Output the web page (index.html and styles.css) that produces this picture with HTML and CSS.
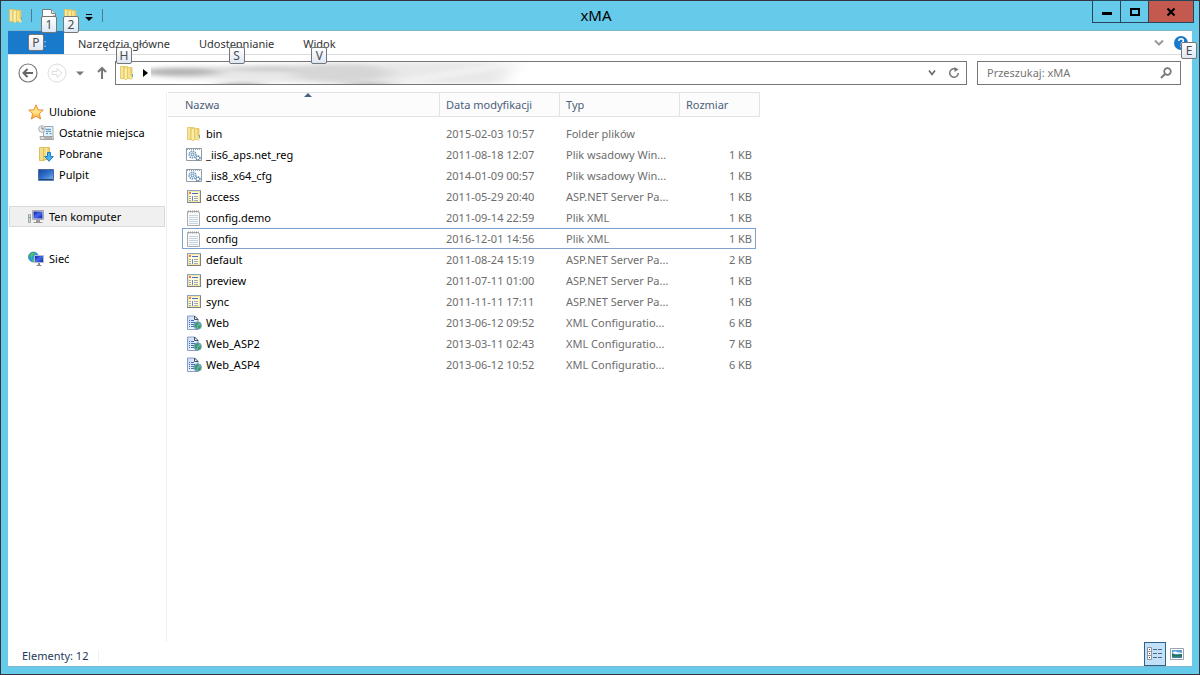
FILE: index.html
```html
<!DOCTYPE html>
<html lang="pl">
<head>
<meta charset="utf-8">
<title>xMA</title>
<link rel="stylesheet" href="styles.css">
</head>
<body>
<svg class="defs" aria-hidden="true">
  <defs>
    <linearGradient id="gold" x1="0" x2="1" y1="0" y2="0"><stop offset="0" stop-color="#efd674"/><stop offset=".5" stop-color="#f8e596"/><stop offset="1" stop-color="#e5c654"/></linearGradient>
    <linearGradient id="screen" x1="0" x2="1" y1="0" y2="1"><stop offset="0" stop-color="#16469b"/><stop offset=".5" stop-color="#2f6ecb"/><stop offset="1" stop-color="#7db2ee"/></linearGradient>
    <linearGradient id="blue" x1="0" x2="1" y1="0" y2="1"><stop offset="0" stop-color="#0a1ea0"/><stop offset=".5" stop-color="#4668ee"/><stop offset="1" stop-color="#0a1cae"/></linearGradient>
    <linearGradient id="starfill" x1="0" x2="0" y1="0" y2="1"><stop offset="0" stop-color="#ffcf5e"/><stop offset=".5" stop-color="#ffe88a"/><stop offset="1" stop-color="#f9a12c"/></linearGradient>
    <linearGradient id="sheet" x1="0" x2="1" y1="0" y2="1"><stop offset="0" stop-color="#c5d8f2"/><stop offset="1" stop-color="#fff"/></linearGradient>
    <filter id="soft" x="-20%" y="-80%" width="140%" height="260%"><feGaussianBlur stdDeviation="9 2"/></filter>
  </defs>
  <symbol id="folder" viewBox="0 0 16 16">
    <path d="M1.500 1.500h5.500v12H1.500z" fill="#ecd47a" stroke="#e0c25c" stroke-width=".8"/>
    <path d="M7 2.500h6v11H7z" fill="url(#gold)" stroke="#e0c25c" stroke-width=".8"/>
    <path d="M2 2h2v11H2z" fill="#f7e7a0"/>
    <path d="M5 3.200l3.500-1.700v12L7 15l-2-1.500z" fill="#faeba6" stroke="#dcbc4c" stroke-width=".7"/>
    <path d="M11 10.500h2.500v4H11z" fill="#f4e08c"/><path d="M13.500 9v3" stroke="#58a9d4"/>
  </symbol>
  <symbol id="page" viewBox="0 0 16 16">
    <path d="M1.500 1.500h9l4 4v9h-13z" fill="#fff" stroke="#777"/>
    <path d="M10.500 1.500v4h4" fill="#ddd" stroke="#888"/><path d="M12 7l3 1-2 1z" fill="#f26a4b"/>
  </symbol>
  <symbol id="star" viewBox="0 0 16 16">
    <path d="M8 .8l2.100 5 5.200.3-4 3.500 1.300 5.400L8 12.200 3.400 15l1.300-5.400-4-3.500 5.200-.3z" fill="url(#starfill)" stroke="#e8842c" stroke-width=".9"/>
  </symbol>
  <symbol id="recent" viewBox="0 0 16 16">
    <path d="M7 1.500h8v10H5.500V6" fill="#e9f4fd" stroke="#9aa7b1"/>
    <path d="M8 4.500h5M8 8.500h2M11.500 8.500h2" stroke="#55a4d9" stroke-width="1.500"/><path d="M8 6.500h5" stroke="#899"/>
    <path d="M2 11.500h13l.5 3h-13z" fill="#ddd" stroke="#a2a2a2"/><path d="M6 13h8" stroke="#888"/>
    <circle cx="4" cy="4" r="3.300" fill="#eee" stroke="#a6abb0"/><path d="M4 2v2h2" fill="none" stroke="#555" stroke-width=".8"/>
  </symbol>
  <symbol id="downloads" viewBox="0 0 16 16">
    <path d="M1.500 1.500h5v13h-5z" fill="#f1dd8b" stroke="#dcc05c"/><path d="M5.500 1.500h6v12h-6z" fill="url(#gold)" stroke="#dcc05c"/>
    <path d="M9.500 6.500h3v4h2.800L11 15.300 6.700 10.500h2.800z" fill="#4bb2f2" stroke="#1c7cc4"/>
  </symbol>
  <symbol id="desktop" viewBox="0 0 16 16">
    <path d="M.5 2.500h15v10H.5z" fill="url(#screen)" stroke="#4a6c9c"/><path d="M0 13.500h16" stroke="#5d86bb"/><path d="M1 12.500h14" stroke="#24426e"/>
  </symbol>
  <symbol id="computer" viewBox="0 0 16 16">
    <path d="M.5 5.500h2v8h-2z" fill="#d8d8d8" stroke="#a0a5a2"/><path d="M1 8.500h1" stroke="#35b44a"/>
    <path d="M4.500 1.500h11v9h-11z" fill="#ddd" stroke="#aaa"/><path d="M5.500 2.500h9v7h-9z" fill="url(#blue)"/>
    <path d="M8 11h4v2H8z" fill="#999"/><path d="M5.500 13.500h9" stroke="#999"/>
  </symbol>
  <symbol id="network" viewBox="0 0 16 16">
    <circle cx="5.500" cy="6" r="5" fill="#2a9ed9" stroke="#2875af" stroke-width=".7"/><path d="M2 4.500Q3 1 7 1.500L5.500 4 4 5l-.5 3zM5 8l2 1-1 2-2-1z" fill="#58c349"/>
    <path d="M6.500 4.500h9v7h-9z" fill="url(#blue)" stroke="#b5bfcc"/><path d="M10 12h2v2h-2z" fill="#858b99"/><path d="M8.500 14.500h5" stroke="#858b99"/>
  </symbol>
  <symbol id="batch" viewBox="0 0 16 16">
    <path d="M.5 1.500h15v12H.5z" fill="#fff" stroke="#949aa2"/><path d="M1 2.500h14" stroke="#9aa5b5" stroke-dasharray="1 1"/>
    <circle cx="6.500" cy="7.500" r="3.300" fill="none" stroke="#6fa0c8" stroke-width="1.700" stroke-dasharray="1.500 .7"/><circle cx="6.500" cy="7.500" r="1.400" fill="#fff" stroke="#5584ad"/>
    <circle cx="12" cy="11" r="2" fill="#fff" stroke="#5079a3" stroke-width="1.300" stroke-dasharray="1.200 .5"/>
  </symbol>
  <symbol id="aspx" viewBox="0 0 16 16">
    <path d="M1.500 1.500h13v12h-13z" fill="#fffbe0" stroke="#8e9ab4"/><path d="M2.500 2.500h11v10h-11z" fill="none" stroke="#f6e69a"/><path d="M1 1.500h14" stroke="#8fa3c8"/><path d="M14.500 2v12M1 13.500h13.500" stroke="#7d8088"/>
    <path d="M3 4h2" stroke="#e0503c" stroke-width="1.500"/><path d="M6 4.500h6" stroke="#4470bb"/><path d="M3 7.500h2M3 9.500h2M3 11.500h2" stroke="#9aa8bb"/><path d="M8 7.500h4M8 9.500h4M8 11.500h4" stroke="#a2aab8"/>
    <path d="M6.500 7v5" stroke="#6a88bd"/>
  </symbol>
  <symbol id="text" viewBox="0 0 16 16">
    <path d="M1.500 1.500h11l1 1v13h-12z" fill="#fafafa" stroke="#ababab"/><path d="M2 1.500h11" stroke="#999" stroke-width="2" stroke-dasharray="1 1"/>
    <path d="M3 5.500h9M3 7.500h9M3 9.500h9M3 11.500h9M3 13.500h9" stroke="#c3d5e0"/>
  </symbol>
  <symbol id="webconfig" viewBox="0 0 16 16">
    <path d="M1.500 1h7l3.500 3.500V14.500H1.500z" fill="url(#sheet)" stroke="#8ba0c4"/><path d="M8.500 1v3.500H12z" fill="#fff" stroke="#33445e" stroke-width=".9"/>
    <path d="M3 5.500h1M3 7.500h1M3 9.500h1M3 11.500h1M5 5.500h3M5 7.500h4M5 9.500h3M5 11.500h3" stroke="#3f6cc0"/>
    <circle cx="11.700" cy="10.500" r="3.800" fill="#6fa8d0" stroke="#5a8ba8" stroke-width=".6"/><path d="M9 9l3-2 1 2-2 1 0 3-2-1zM12 11l3-1-1 3-2 1z" fill="#3aa04a"/>
  </symbol>
</svg>

<div class="window">
  <header class="titlebar">
    <div class="quick">
      <svg class="icon"><use href="#folder"/></svg>
      <span class="divider"></span>
      <button class="quick-button" aria-label="Właściwości"><svg class="icon"><use href="#page"/></svg><kbd class="tip tip-quick">1</kbd></button>
      <button class="quick-button" aria-label="Nowy folder"><svg class="icon"><use href="#folder"/></svg><kbd class="tip tip-quick">2</kbd></button>
      <button class="customize" aria-label="Dostosuj"><svg width="8" height="8" viewBox="0 0 8 8"><path d="M1 .5h6" stroke="#000"/><path d="M0 3h8L4 7z"/></svg></button>
      <span class="divider"></span>
    </div>
    <h1 class="title">xMA</h1>
    <div class="controls">
      <button class="control" aria-label="Minimalizuj"><svg width="12" height="12" viewBox="0 0 12 12"><path d="M1 7.500h10" stroke="#000" stroke-width="3"/></svg></button>
      <button class="control" aria-label="Maksymalizuj"><svg width="12" height="12" viewBox="0 0 12 12"><path d="M2 3h8v6H2z" fill="none" stroke="#000" stroke-width="2"/></svg></button>
      <button class="control close" aria-label="Zamknij"><svg width="12" height="12" viewBox="0 0 12 12"><path d="M2.500 2.500l7 7M9.500 2.500l-7 7" stroke="#000" stroke-width="2.200"/></svg></button>
    </div>
  </header>

  <div class="content">
    <nav class="ribbon">
      <button class="tab file-tab"><kbd class="tip tip-file">P</kbd>:</button>
      <button class="tab">Narzędzia główne<kbd class="tip tip-tab">H</kbd></button>
      <button class="tab">Udostępnianie<kbd class="tip tip-tab">S</kbd></button>
      <button class="tab">Widok<kbd class="tip tip-tab">V</kbd></button>
      <div class="ribbon-end">
        <button class="plain" aria-label="Rozwiń wstążkę"><svg width="10" height="8" viewBox="0 0 10 8"><path d="M1 1.500l4 4 4-4" fill="none" stroke="#999" stroke-width="2"/></svg></button>
        <button class="plain help" aria-label="Pomoc"><svg width="14" height="14" viewBox="0 0 14 14"><circle cx="7" cy="7" r="7" fill="#1979ca"/><path d="M4.800 5q0-2.200 2.300-2.200T9.400 5c0 1.500-2.200 1.400-2.200 3.400" fill="none" stroke="#fff" stroke-width="1.500"/><path d="M6.400 9.700H8v1.500H6.400z" fill="#fff"/></svg><kbd class="tip tip-help">E</kbd></button>
      </div>
    </nav>

    <div class="toolbar">
      <div class="history">
        <button class="plain" aria-label="Wstecz"><svg width="20" height="20" viewBox="0 0 20 20"><circle cx="10" cy="10" r="9" fill="none" stroke="#777" stroke-width="1.200"/><path d="M15 10H6M9.500 6L5.500 10l4 4" fill="none" stroke="#666" stroke-width="2"/></svg></button>
        <button class="plain" aria-label="Dalej"><svg width="20" height="20" viewBox="0 0 20 20"><circle cx="10" cy="10" r="9" fill="none" stroke="#ddd"/><path d="M5 8.500h5v-3l5 4.500-5 4.500v-3H5z" fill="none" stroke="#ddd"/></svg></button>
        <button class="plain" aria-label="Ostatnie lokalizacje"><svg width="8" height="5" viewBox="0 0 8 5"><path d="M0 .5h8l-4 4z" fill="#777"/></svg></button>
        <button class="plain up" aria-label="W górę"><svg width="10" height="14" viewBox="0 0 10 14"><path d="M5 13V2M1 6l4-4 4 4" fill="none" stroke="#777" stroke-width="2"/></svg></button>
      </div>
      <div class="address">
        <svg class="icon"><use href="#folder"/></svg>
        <svg class="crumb" width="5" height="8" viewBox="0 0 5 8"><path d="M0 0l5 4-5 4z"/></svg>
        <svg class="path" width="380" height="22" viewBox="0 0 380 22" aria-hidden="true">
          <g filter="url(#soft)">
            <path d="M10 5L200 0h165l-15 22-150 1L10 16z" fill="#e8e8e8"/>
            <ellipse cx="28" cy="10" rx="42" ry="4" fill="#b4b4b4"/>
            <ellipse cx="120" cy="7" rx="45" ry="2" fill="#c4c4c4"/>
            <ellipse cx="190" cy="11" rx="50" ry="9" fill="#d6d6d6"/>
            <ellipse cx="90" cy="23" rx="24" ry="2" fill="#999"/>
            <ellipse cx="218" cy="23" rx="24" ry="2" fill="#aaa"/>
            <path d="M250 20L360 2" stroke="#f4f4f4" stroke-width="5"/>
          </g>
        </svg>
        <div class="address-end">
          <button class="plain" aria-label="Poprzednie lokalizacje"><svg width="8" height="8" viewBox="0 0 8 8"><path d="M1 1.500l3 4 3-4" fill="none" stroke="#666" stroke-width="1.600"/></svg></button>
          <button class="plain" aria-label="Odśwież"><svg width="12" height="12" viewBox="0 0 12 12"><path d="M8 2.200A4.300 4.300 0 1 0 10.300 6" fill="none" stroke="#777" stroke-width="1.500"/><path d="M6.500 0v5L10.500 2.500z" fill="#777"/></svg></button>
        </div>
      </div>
      <label class="search">
        <input class="search-input" type="text" placeholder="Przeszukaj: xMA" aria-label="Przeszukaj: xMA">
        <svg width="12" height="12" viewBox="0 0 12 12"><circle cx="7.500" cy="4.500" r="3.300" fill="none" stroke="#777" stroke-width="1.700"/><path d="M5 7L1 11" stroke="#777" stroke-width="2"/></svg>
      </label>
    </div>

    <div class="main">
      <aside class="sidebar">
        <ul class="tree">
          <li><a class="node" href="#"><svg class="icon"><use href="#star"/></svg>Ulubione</a></li>
          <li><a class="node child" href="#"><svg class="icon"><use href="#recent"/></svg>Ostatnie miejsca</a></li>
          <li><a class="node child" href="#"><svg class="icon"><use href="#downloads"/></svg>Pobrane</a></li>
          <li><a class="node child" href="#"><svg class="icon"><use href="#desktop"/></svg>Pulpit</a></li>
        </ul>
        <ul class="tree"><li><a class="node current" href="#"><svg class="icon"><use href="#computer"/></svg>Ten komputer</a></li></ul>
        <ul class="tree"><li><a class="node" href="#"><svg class="icon"><use href="#network"/></svg>Sieć</a></li></ul>
      </aside>

      <main class="files">
        <table class="list">
          <colgroup><col class="col-name"><col class="col-data"><col class="col-data"><col class="col-size"></colgroup>
          <thead><tr><th class="name-head">Nazwa<svg class="sort" width="8" height="4" viewBox="0 0 8 4"><path d="M0 4l4-4 4 4z" fill="#4a5f85"/></svg></th><th>Data modyfikacji</th><th>Typ</th><th>Rozmiar</th></tr></thead>
          <tbody>
            <tr><td><span class="file"><svg class="icon"><use href="#folder"/></svg>bin</span></td><td>2015-02-03 10:57</td><td>Folder plików</td><td></td></tr>
            <tr><td><span class="file"><svg class="icon"><use href="#batch"/></svg>_iis6_aps.net_reg</span></td><td>2011-08-18 12:07</td><td>Plik wsadowy Win...</td><td>1 KB</td></tr>
            <tr><td><span class="file"><svg class="icon"><use href="#batch"/></svg>_iis8_x64_cfg</span></td><td>2014-01-09 00:57</td><td>Plik wsadowy Win...</td><td>1 KB</td></tr>
            <tr><td><span class="file"><svg class="icon"><use href="#aspx"/></svg>access</span></td><td>2011-05-29 20:40</td><td>ASP.NET Server Pa...</td><td>1 KB</td></tr>
            <tr><td><span class="file"><svg class="icon"><use href="#text"/></svg>config.demo</span></td><td>2011-09-14 22:59</td><td>Plik XML</td><td>1 KB</td></tr>
            <tr class="focused"><td><span class="file"><svg class="icon"><use href="#text"/></svg>config</span></td><td>2016-12-01 14:56</td><td>Plik XML</td><td>1 KB</td></tr>
            <tr><td><span class="file"><svg class="icon"><use href="#aspx"/></svg>default</span></td><td>2011-08-24 15:19</td><td>ASP.NET Server Pa...</td><td>2 KB</td></tr>
            <tr><td><span class="file"><svg class="icon"><use href="#aspx"/></svg>preview</span></td><td>2011-07-11 01:00</td><td>ASP.NET Server Pa...</td><td>1 KB</td></tr>
            <tr><td><span class="file"><svg class="icon"><use href="#aspx"/></svg>sync</span></td><td>2011-11-11 17:11</td><td>ASP.NET Server Pa...</td><td>1 KB</td></tr>
            <tr><td><span class="file"><svg class="icon"><use href="#webconfig"/></svg>Web</span></td><td>2013-06-12 09:52</td><td>XML Configuratio...</td><td>6 KB</td></tr>
            <tr><td><span class="file"><svg class="icon"><use href="#webconfig"/></svg>Web_ASP2</span></td><td>2013-03-11 02:43</td><td>XML Configuratio...</td><td>7 KB</td></tr>
            <tr><td><span class="file"><svg class="icon"><use href="#webconfig"/></svg>Web_ASP4</span></td><td>2013-06-12 10:52</td><td>XML Configuratio...</td><td>6 KB</td></tr>
          </tbody>
        </table>
      </main>
    </div>

    <footer class="status">
      <span class="count">Elementy: 12</span>
      <div class="views">
        <button class="view active" aria-label="Szczegóły"><svg width="16" height="14" viewBox="0 0 16 14"><path d="M.5.500h4v4h-4zM.5 4.500h4v4h-4zM.5 8.500h4v4h-4z" fill="#fff" stroke="#8d969e"/><path d="M2 2.500h1M2 10.500h1" stroke="#444"/><path d="M2 6.500h1" stroke="#d00" stroke-width="1"/><path d="M6 2.500h4M11 2.500h4M6 6.500h4M11 6.500h4M6 10.500h4M11 10.500h4" stroke="#526783"/></svg></button>
        <button class="view" aria-label="Duże ikony"><svg width="14" height="12" viewBox="0 0 14 12"><path d="M.5.500h13v11H.5z" fill="#fff" stroke="#98a3b0"/><path d="M2 2h10v8H2z" fill="#5c9fd6"/><path d="M2 5q3-3 5-1l5 1v1H2z" fill="#e8f5fa"/><path d="M2 5l4 2 6-1v4H2z" fill="#28725a"/><path d="M2 8.500h10V10H2z" fill="#3c87a0"/></svg></button>
      </div>
    </footer>
  </div>
</div>
</body>
</html>
```
FILE: styles.css
```css
* { box-sizing: border-box; }
body {
  margin: 0;
  font: 11px/16px "Noto Sans", "Open Sans", sans-serif;
  color: #000;
}
button { font: inherit; color: inherit; padding: 0; border: 0; background: none; }
svg { display: block; flex: none; }
.defs { position: absolute; width: 0; height: 0; }
.icon { width: 16px; height: 16px; }

.window {
  display: flex;
  flex-direction: column;
  min-height: 100vh;
  padding: 0 7px 7px;
  border: 1px solid #36343c;
  background: #66caea;
}
.titlebar {
  display: grid;
  grid-template-columns: 1fr auto 1fr;
  height: 29px;
}
.quick { display: flex; align-items: center; gap: 7px; height: 29px; }
.divider { width: 1px; height: 13px; background: #50798d; }
.quick-button { position: relative; margin-right: -1px; }
.quick-button:first-of-type { margin-left: 2px; }
.customize { margin: 4px 2px 0 0; }
.title { margin: 0; padding-right: 8px; font-size: 15px; font-weight: 400; line-height: 29px; }
.controls { display: flex; justify-self: end; align-self: start; margin: -1px -2px 0 0; border: 1px solid #25465a; }
.control { display: grid; place-items: center; width: 28px; height: 21px; border-right: 1px solid #25465a; }
.close { width: 44px; border: 0; background: #c4594f; }

.tip {
  position: absolute;
  z-index: 2;
  width: 16px;
  height: 17px;
  border: 1px solid #767676;
  border-radius: 2px;
  background: linear-gradient(#fff, #dde8f5);
  color: #4c4c4c;
  font: 12px/15px "Noto Sans", "Open Sans", sans-serif;
  text-align: center;
}
.tip-quick { left: 0; top: 8px; }
.tip-file { left: 20px; top: 3px; }
.tip-tab { left: 50%; top: 16px; margin-left: -8px; }
.tip-help { left: 7px; top: 6px; }

.content { display: flex; flex: 1; flex-direction: column; background: #fff; border: solid #7fb5cf; border-width: 1px 0; }
.ribbon { display: flex; gap: 1px; height: 24px; border-bottom: 1px solid #dadbdc; }
.tab { position: relative; padding: 2px 14px 0; color: #333; }
.file-tab { width: 56px; margin-right: -1px; background: #1979ca; color: #a9d2f3; padding: 0 0 0 18px; }
.ribbon-end { display: flex; align-items: center; gap: 10px; margin-left: auto; padding-right: 4px; }
.help { position: relative; }

.toolbar { display: flex; gap: 10px; padding: 6px 11px 7px 10px; }
.history { display: flex; align-items: center; gap: 9px; width: 87px; }
.up { margin-left: 4px; }
.address { display: flex; flex: 1; align-items: center; height: 24px; min-width: 0; border: 1px solid #767676; overflow: hidden; }
.address .icon { margin-left: 3px; }
.crumb { margin: 0 3px 0 8px; }
.path { flex: 0 1 auto; min-width: 0; }
.address-end { display: flex; align-items: center; gap: 12px; margin-left: auto; padding-right: 6px; }
.search { display: flex; align-items: center; width: 204px; height: 24px; padding: 0 8px; border: 1px solid #767676; }
.search-input { flex: 1; min-width: 0; padding: 0 1px; border: 0; outline: 0; background: none; font: inherit; }
.search-input::placeholder { color: #757575; opacity: 1; }

.main { display: flex; flex: 1; }
.sidebar { width: 159px; padding: 9px 1px 0; border-right: 1px solid #f0f0f0; }
.tree { margin: 0 0 21px; padding: 0; list-style: none; }
.node { display: flex; align-items: center; gap: 5px; height: 21px; padding-left: 19px; color: #000; text-decoration: none; }
.child { padding-left: 29px; }
.current { padding-left: 18px; border: 1px solid #dadada; background: #f0f0f0; }

.files { flex: 1; min-width: 0; padding-left: 1px; }
.list { width: 592px; table-layout: fixed; border-spacing: 0; color: #6d6d6d; }
.col-name { width: 272px; }
.col-data { width: 120px; }
.col-size { width: 80px; }
th { position: relative; height: 25px; padding: 0 6px; border: solid #e2e3e4; border-width: 1px 1px 1px 0; background: #fcfcfc; color: #4c607a; font-weight: 400; text-align: left; }
.name-head { padding-left: 17px; }
.sort { position: absolute; left: 50%; top: 0; }
tbody::before { content: ""; display: block; height: 6px; }
tbody tr { position: relative; }
td { height: 21px; padding: 0 8px 0 6px; white-space: nowrap; }
td:first-child { padding-left: 18px; }
td:last-child { text-align: right; }
.file { display: flex; align-items: center; gap: 4px; color: #000; }
.focused::after { content: ""; position: absolute; inset: 0 4px 0 14px; border: 1px solid #7da2ce; }

.status { display: flex; align-items: center; justify-content: space-between; height: 24px; padding-left: 14px; color: #1e395b; }
.count { margin-top: 3px; padding-right: 10px; border-right: 1px solid #f0f0f0; line-height: 12px; }
.views { display: flex; padding-right: 4px; }
.view { display: grid; place-items: center; width: 22px; height: 24px; }
.active { border: 1px solid #2c628b; background: #c2e0f7; }
```
